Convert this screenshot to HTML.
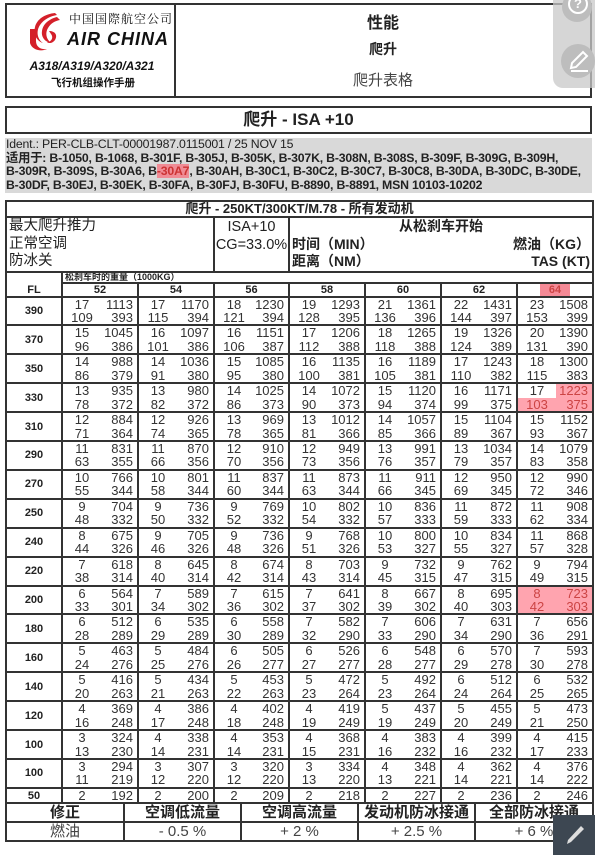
<!DOCTYPE html>
<html><head><meta charset="utf-8">
<style>
*{margin:0;padding:0;box-sizing:border-box}
body{width:595px;height:855px;background:#fff;position:relative;overflow:hidden;font-family:"Liberation Sans","Noto Sans CJK SC",sans-serif;color:#222}
.abs{position:absolute}
.hdr{left:5px;top:3px;width:587px;height:95px;border:2px solid #333}
.hdr .div{position:absolute;left:167px;top:0;bottom:0;border-left:2px solid #333}
.box2{left:5px;top:106px;width:587px;height:28px;border:2px solid #333;text-align:center;font-weight:bold;font-size:17px;line-height:24px}
.grey{left:5px;top:138px;width:587px;height:55px;background:#d9d9d9;font-size:12.3px;line-height:13.6px;padding:0 1px;letter-spacing:-0.2px;white-space:nowrap;overflow:hidden}
.wrap{position:absolute;left:5px;top:200px;width:587px}
table{width:587px;border-collapse:collapse;table-layout:fixed}
td{border:2px solid #333;padding:0;vertical-align:middle;overflow:hidden}
.c{display:grid;grid-template-columns:38px 1fr;font-size:13px;line-height:13.45px;color:#333}
.c span:nth-child(odd){text-align:center}
.c span:nth-child(even){text-align:right;padding-right:4px}
.fl{font-weight:bold;font-size:11px;text-align:center}
.dr td{height:26.9px}
.hl{background:rgba(255,90,110,.55);color:#c44}
</style></head><body>

<div class="abs hdr">
  <svg class="abs" style="left:20px;top:6px" width="40" height="42" viewBox="0 0 40 42">
    <path d="M28 2 C18 3 10 8 8 16 C6 24 10 30 16 32 C10 28 9 20 13 14 C17 8 24 5 30 4 Z" fill="#d4202a"/>
    <path d="M30 6 C22 8 16 13 15 20 C14 26 18 31 24 32 C19 28 18 22 21 17 C24 12 28 10 33 9 Z" fill="#d4202a"/>
    <path d="M3 18 L9 18 L9 30 C9 36 14 39 20 38 C14 41 5 39 3 32 Z" fill="#d4202a"/>
    <path d="M22 20 C28 20 31 24 28 29 C26 32 22 33 20 31 C24 31 27 27 24 23 Z" fill="#d4202a"/>
  </svg>
  <div class="abs" style="left:62px;top:5px;font-family:'Noto Serif CJK SC',serif;font-size:12px;letter-spacing:1px;color:#111">中国国際航空公司</div>
  <div class="abs" style="left:60px;top:24px;font-size:18px;font-weight:bold;font-style:italic;letter-spacing:1px;color:#111">AIR CHINA</div>
  <div class="abs" style="left:4px;top:54px;width:162px;text-align:center;font-size:12px;font-weight:bold;font-style:italic;color:#111">A318/A319/A320/A321</div>
  <div class="abs" style="left:6px;top:70px;width:160px;text-align:center;font-size:10.5px;font-weight:bold;color:#111">飞行机组操作手册</div>
  <div class="div"></div>
  <div class="abs" style="left:169px;top:4px;width:414px;text-align:center;font-size:16px;font-weight:bold">性能</div>
  <div class="abs" style="left:169px;top:34px;width:414px;text-align:center;font-size:14px;font-weight:bold">爬升</div>
  <div class="abs" style="left:169px;top:64px;width:414px;text-align:center;font-size:15px;color:#444">爬升表格</div>
</div>

<div class="abs box2">爬升 - ISA +10</div>

<div class="abs grey">
<div>Ident.: PER-CLB-CLT-00001987.0115001 / 25 NOV 15</div>
<div style="font-weight:bold">适用于: B-1050, B-1068, B-301F, B-305J, B-305K, B-307K, B-308N, B-308S, B-309F, B-309G, B-309H,</div>
<div style="font-weight:bold">B-309R, B-309S, B-30A6, B<span style="background:#f08b95;color:#c33">-30A7</span>, B-30AH, B-30C1, B-30C2, B-30C7, B-30C8, B-30DA, B-30DC, B-30DE,</div>
<div style="font-weight:bold">B-30DF, B-30EJ, B-30EK, B-30FA, B-30FJ, B-30FU, B-8890, B-8891, MSN 10103-10202</div>
</div>

<div class="wrap">
<table>
<colgroup><col style="width:56px"><col style="width:76px"><col style="width:76px"><col style="width:75px"><col style="width:76px"><col style="width:76px"><col style="width:76px"><col style="width:76px"></colgroup>
<tr><td colspan="8" style="height:16px;text-align:center;font-weight:bold;font-size:13px;line-height:14px">爬升 - 250KT/300KT/M.78 - 所有发动机</td></tr>
<tr><td colspan="3" style="height:53px;font-size:14.5px;line-height:17.5px;padding-left:2px;vertical-align:top">最大爬升推力<br>正常空调<br>防冰关</td>
<td colspan="1" style="text-align:center;font-size:14.5px;line-height:18px;vertical-align:top">ISA+10<br>CG=33.0%</td>
<td colspan="4" style="font-size:14px;font-weight:bold;line-height:17.5px;vertical-align:top;padding:0 2px"><div style="text-align:center">从松刹车开始</div><div style="display:flex;justify-content:space-between"><span>时间（MIN）</span><span>燃油（KG）</span></div><div style="display:flex;justify-content:space-between"><span>距离（NM）</span><span>TAS (KT)</span></div></td></tr>
<tr><td rowspan="2" class="fl" style="vertical-align:bottom">FL</td><td colspan="7" style="height:9px;font-size:9px;font-weight:bold;line-height:9px;padding-left:2px">松刹车时的重量（1000KG）</td></tr>
<tr style="font-weight:bold;font-size:11px;text-align:center;line-height:12px"><td style="height:12px">52</td><td>54</td><td>56</td><td>58</td><td>60</td><td>62</td><td><span style="background:#f58a96;padding:0 9px;color:#c44">64</span></td></tr>

<tr class="dr"><td class="fl">390</td><td><div class="c"><span>17</span><span>1113</span><span>109</span><span>393</span></div></td><td><div class="c"><span>17</span><span>1170</span><span>115</span><span>394</span></div></td><td><div class="c"><span>18</span><span>1230</span><span>121</span><span>394</span></div></td><td><div class="c"><span>19</span><span>1293</span><span>128</span><span>395</span></div></td><td><div class="c"><span>21</span><span>1361</span><span>136</span><span>396</span></div></td><td><div class="c"><span>22</span><span>1431</span><span>144</span><span>397</span></div></td><td><div class="c"><span>23</span><span>1508</span><span>153</span><span>399</span></div></td></tr>
<tr class="dr"><td class="fl">370</td><td><div class="c"><span>15</span><span>1045</span><span>96</span><span>386</span></div></td><td><div class="c"><span>16</span><span>1097</span><span>101</span><span>386</span></div></td><td><div class="c"><span>16</span><span>1151</span><span>106</span><span>387</span></div></td><td><div class="c"><span>17</span><span>1206</span><span>112</span><span>388</span></div></td><td><div class="c"><span>18</span><span>1265</span><span>118</span><span>388</span></div></td><td><div class="c"><span>19</span><span>1326</span><span>124</span><span>389</span></div></td><td><div class="c"><span>20</span><span>1390</span><span>131</span><span>390</span></div></td></tr>
<tr class="dr"><td class="fl">350</td><td><div class="c"><span>14</span><span>988</span><span>86</span><span>379</span></div></td><td><div class="c"><span>14</span><span>1036</span><span>91</span><span>380</span></div></td><td><div class="c"><span>15</span><span>1085</span><span>95</span><span>380</span></div></td><td><div class="c"><span>16</span><span>1135</span><span>100</span><span>381</span></div></td><td><div class="c"><span>16</span><span>1189</span><span>105</span><span>381</span></div></td><td><div class="c"><span>17</span><span>1243</span><span>110</span><span>382</span></div></td><td><div class="c"><span>18</span><span>1300</span><span>115</span><span>383</span></div></td></tr>
<tr class="dr"><td class="fl">330</td><td><div class="c"><span>13</span><span>935</span><span>78</span><span>372</span></div></td><td><div class="c"><span>13</span><span>980</span><span>82</span><span>372</span></div></td><td><div class="c"><span>14</span><span>1025</span><span>86</span><span>373</span></div></td><td><div class="c"><span>14</span><span>1072</span><span>90</span><span>373</span></div></td><td><div class="c"><span>15</span><span>1120</span><span>94</span><span>374</span></div></td><td><div class="c"><span>16</span><span>1171</span><span>99</span><span>375</span></div></td><td><div class="c"><span>17</span><span class="hl">1223</span><span class="hl">103</span><span class="hl">375</span></div></td></tr>
<tr class="dr"><td class="fl">310</td><td><div class="c"><span>12</span><span>884</span><span>71</span><span>364</span></div></td><td><div class="c"><span>12</span><span>926</span><span>74</span><span>365</span></div></td><td><div class="c"><span>13</span><span>969</span><span>78</span><span>365</span></div></td><td><div class="c"><span>13</span><span>1012</span><span>81</span><span>366</span></div></td><td><div class="c"><span>14</span><span>1057</span><span>85</span><span>366</span></div></td><td><div class="c"><span>15</span><span>1104</span><span>89</span><span>367</span></div></td><td><div class="c"><span>15</span><span>1152</span><span>93</span><span>367</span></div></td></tr>
<tr class="dr"><td class="fl">290</td><td><div class="c"><span>11</span><span>831</span><span>63</span><span>355</span></div></td><td><div class="c"><span>11</span><span>870</span><span>66</span><span>356</span></div></td><td><div class="c"><span>12</span><span>910</span><span>70</span><span>356</span></div></td><td><div class="c"><span>12</span><span>949</span><span>73</span><span>356</span></div></td><td><div class="c"><span>13</span><span>991</span><span>76</span><span>357</span></div></td><td><div class="c"><span>13</span><span>1034</span><span>79</span><span>357</span></div></td><td><div class="c"><span>14</span><span>1079</span><span>83</span><span>358</span></div></td></tr>
<tr class="dr"><td class="fl">270</td><td><div class="c"><span>10</span><span>766</span><span>55</span><span>344</span></div></td><td><div class="c"><span>10</span><span>801</span><span>58</span><span>344</span></div></td><td><div class="c"><span>11</span><span>837</span><span>60</span><span>344</span></div></td><td><div class="c"><span>11</span><span>873</span><span>63</span><span>344</span></div></td><td><div class="c"><span>11</span><span>911</span><span>66</span><span>345</span></div></td><td><div class="c"><span>12</span><span>950</span><span>69</span><span>345</span></div></td><td><div class="c"><span>12</span><span>990</span><span>72</span><span>346</span></div></td></tr>
<tr class="dr"><td class="fl">250</td><td><div class="c"><span>9</span><span>704</span><span>48</span><span>332</span></div></td><td><div class="c"><span>9</span><span>736</span><span>50</span><span>332</span></div></td><td><div class="c"><span>9</span><span>769</span><span>52</span><span>332</span></div></td><td><div class="c"><span>10</span><span>802</span><span>54</span><span>332</span></div></td><td><div class="c"><span>10</span><span>836</span><span>57</span><span>333</span></div></td><td><div class="c"><span>11</span><span>872</span><span>59</span><span>333</span></div></td><td><div class="c"><span>11</span><span>908</span><span>62</span><span>334</span></div></td></tr>
<tr class="dr"><td class="fl">240</td><td><div class="c"><span>8</span><span>675</span><span>44</span><span>326</span></div></td><td><div class="c"><span>9</span><span>705</span><span>46</span><span>326</span></div></td><td><div class="c"><span>9</span><span>736</span><span>48</span><span>326</span></div></td><td><div class="c"><span>9</span><span>768</span><span>51</span><span>326</span></div></td><td><div class="c"><span>10</span><span>800</span><span>53</span><span>327</span></div></td><td><div class="c"><span>10</span><span>834</span><span>55</span><span>327</span></div></td><td><div class="c"><span>11</span><span>868</span><span>57</span><span>328</span></div></td></tr>
<tr class="dr"><td class="fl">220</td><td><div class="c"><span>7</span><span>618</span><span>38</span><span>314</span></div></td><td><div class="c"><span>8</span><span>645</span><span>40</span><span>314</span></div></td><td><div class="c"><span>8</span><span>674</span><span>42</span><span>314</span></div></td><td><div class="c"><span>8</span><span>703</span><span>43</span><span>314</span></div></td><td><div class="c"><span>9</span><span>732</span><span>45</span><span>315</span></div></td><td><div class="c"><span>9</span><span>762</span><span>47</span><span>315</span></div></td><td><div class="c"><span>9</span><span>794</span><span>49</span><span>315</span></div></td></tr>
<tr class="dr"><td class="fl">200</td><td><div class="c"><span>6</span><span>564</span><span>33</span><span>301</span></div></td><td><div class="c"><span>7</span><span>589</span><span>34</span><span>302</span></div></td><td><div class="c"><span>7</span><span>615</span><span>36</span><span>302</span></div></td><td><div class="c"><span>7</span><span>641</span><span>37</span><span>302</span></div></td><td><div class="c"><span>8</span><span>667</span><span>39</span><span>302</span></div></td><td><div class="c"><span>8</span><span>695</span><span>40</span><span>303</span></div></td><td><div class="c"><span class="hl">8</span><span class="hl">723</span><span class="hl">42</span><span class="hl">303</span></div></td></tr>
<tr class="dr"><td class="fl">180</td><td><div class="c"><span>6</span><span>512</span><span>28</span><span>289</span></div></td><td><div class="c"><span>6</span><span>535</span><span>29</span><span>289</span></div></td><td><div class="c"><span>6</span><span>558</span><span>30</span><span>289</span></div></td><td><div class="c"><span>7</span><span>582</span><span>32</span><span>290</span></div></td><td><div class="c"><span>7</span><span>606</span><span>33</span><span>290</span></div></td><td><div class="c"><span>7</span><span>631</span><span>34</span><span>290</span></div></td><td><div class="c"><span>7</span><span>656</span><span>36</span><span>291</span></div></td></tr>
<tr class="dr"><td class="fl">160</td><td><div class="c"><span>5</span><span>463</span><span>24</span><span>276</span></div></td><td><div class="c"><span>5</span><span>484</span><span>25</span><span>276</span></div></td><td><div class="c"><span>6</span><span>505</span><span>26</span><span>277</span></div></td><td><div class="c"><span>6</span><span>526</span><span>27</span><span>277</span></div></td><td><div class="c"><span>6</span><span>548</span><span>28</span><span>277</span></div></td><td><div class="c"><span>6</span><span>570</span><span>29</span><span>278</span></div></td><td><div class="c"><span>7</span><span>593</span><span>30</span><span>278</span></div></td></tr>
<tr class="dr"><td class="fl">140</td><td><div class="c"><span>5</span><span>416</span><span>20</span><span>263</span></div></td><td><div class="c"><span>5</span><span>434</span><span>21</span><span>263</span></div></td><td><div class="c"><span>5</span><span>453</span><span>22</span><span>263</span></div></td><td><div class="c"><span>5</span><span>472</span><span>23</span><span>264</span></div></td><td><div class="c"><span>5</span><span>492</span><span>23</span><span>264</span></div></td><td><div class="c"><span>6</span><span>512</span><span>24</span><span>264</span></div></td><td><div class="c"><span>6</span><span>532</span><span>25</span><span>265</span></div></td></tr>
<tr class="dr"><td class="fl">120</td><td><div class="c"><span>4</span><span>369</span><span>16</span><span>248</span></div></td><td><div class="c"><span>4</span><span>386</span><span>17</span><span>248</span></div></td><td><div class="c"><span>4</span><span>402</span><span>18</span><span>248</span></div></td><td><div class="c"><span>4</span><span>419</span><span>19</span><span>249</span></div></td><td><div class="c"><span>5</span><span>437</span><span>19</span><span>249</span></div></td><td><div class="c"><span>5</span><span>455</span><span>20</span><span>249</span></div></td><td><div class="c"><span>5</span><span>473</span><span>21</span><span>250</span></div></td></tr>
<tr class="dr"><td class="fl">100</td><td><div class="c"><span>3</span><span>324</span><span>13</span><span>230</span></div></td><td><div class="c"><span>4</span><span>338</span><span>14</span><span>231</span></div></td><td><div class="c"><span>4</span><span>353</span><span>14</span><span>231</span></div></td><td><div class="c"><span>4</span><span>368</span><span>15</span><span>231</span></div></td><td><div class="c"><span>4</span><span>383</span><span>16</span><span>232</span></div></td><td><div class="c"><span>4</span><span>399</span><span>16</span><span>232</span></div></td><td><div class="c"><span>4</span><span>415</span><span>17</span><span>233</span></div></td></tr>
<tr class="dr"><td class="fl">100</td><td><div class="c"><span>3</span><span>294</span><span>11</span><span>219</span></div></td><td><div class="c"><span>3</span><span>307</span><span>12</span><span>220</span></div></td><td><div class="c"><span>3</span><span>320</span><span>12</span><span>220</span></div></td><td><div class="c"><span>3</span><span>334</span><span>13</span><span>220</span></div></td><td><div class="c"><span>4</span><span>348</span><span>13</span><span>221</span></div></td><td><div class="c"><span>4</span><span>362</span><span>14</span><span>221</span></div></td><td><div class="c"><span>4</span><span>376</span><span>14</span><span>222</span></div></td></tr>
<tr><td class="fl" style="height:12px">50</td><td><div class="c"><span>2</span><span>192</span></div></td><td><div class="c"><span>2</span><span>200</span></div></td><td><div class="c"><span>2</span><span>209</span></div></td><td><div class="c"><span>2</span><span>218</span></div></td><td><div class="c"><span>2</span><span>227</span></div></td><td><div class="c"><span>2</span><span>236</span></div></td><td><div class="c"><span>2</span><span>246</span></div></td></tr>
</table>

<table style="margin-top:-2px">
<colgroup><col style="width:118px"><col style="width:117px"><col style="width:117px"><col style="width:117px"><col style="width:118px"></colgroup>
<tr style="font-weight:bold;font-size:15px;text-align:center;line-height:17px"><td style="height:18px">修正</td><td>空调低流量</td><td>空调高流量</td><td>发动机防冰接通</td><td>全部防冰接通</td></tr>
<tr style="font-size:15px;text-align:center;color:#444;line-height:17px"><td style="height:18px">燃油</td><td>- 0.5 %</td><td>+ 2 %</td><td>+ 2.5 %</td><td>+ 6 %</td></tr>
</table>
</div>

<div class="abs" style="left:553px;top:-10px;width:50px;height:98px;background:rgba(200,200,200,.75);border-radius:10px"></div>
<div class="abs" style="left:562px;top:-8px;width:30px;height:30px;border-radius:50%;background:#bdbdbd;border:0"></div>
<div class="abs" style="left:568px;top:-6px;width:20px;height:20px;border-radius:50%;border:2px solid #fff;color:#fff;font-size:13px;line-height:16px;text-align:center;font-weight:bold">?</div>
<div class="abs" style="left:561px;top:44px;width:34px;height:34px;border-radius:50%;background:#bdbdbd"></div>
<svg class="abs" style="left:568px;top:50px" width="22" height="22" viewBox="0 0 22 22"><path d="M3 18 L4 13 L15 2 L19 6 L8 17 Z M3 21 H20" stroke="#fff" stroke-width="2" fill="none"/></svg>
<div class="abs" style="left:553px;top:815px;width:42px;height:40px;background:#3d4752"></div>
<svg class="abs" style="left:563px;top:822px" width="24" height="26" viewBox="0 0 24 26"><path d="M4 22 L5 18 L18 4 L21 7 L8 20 Z" fill="#ddd"/></svg>
</body></html>
